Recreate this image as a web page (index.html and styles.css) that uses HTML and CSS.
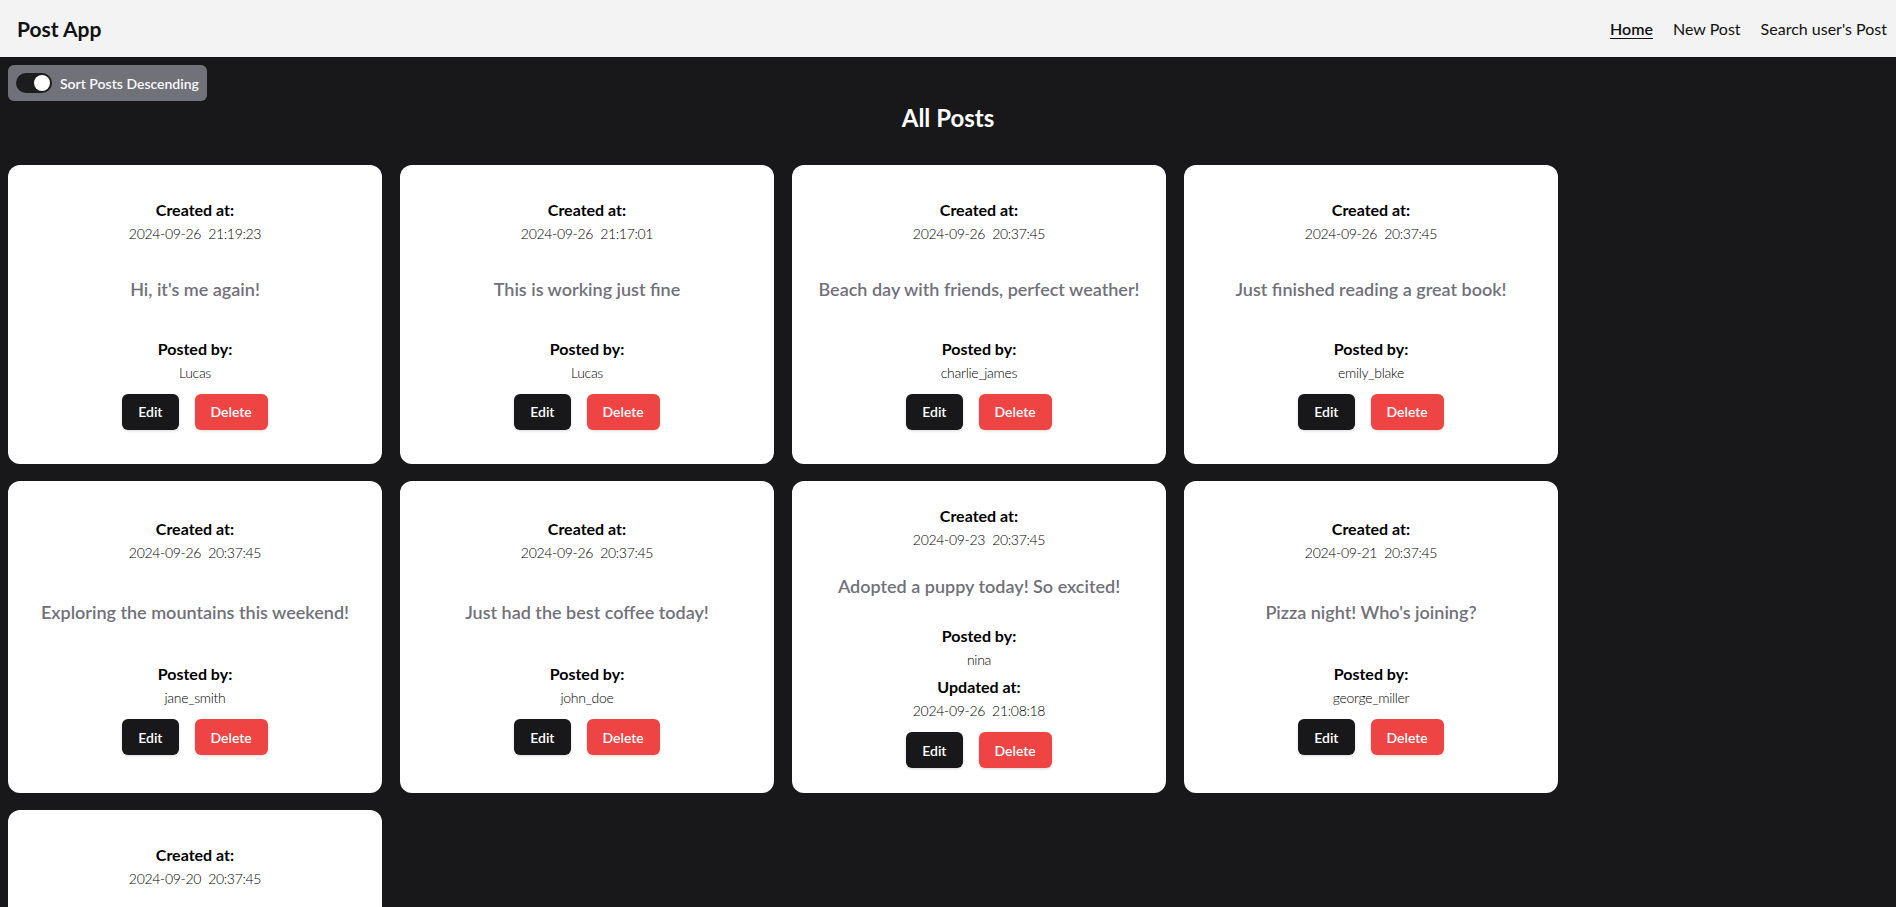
FILE: index.html
```html
<!DOCTYPE html>
<html lang="en">
<head>
<meta charset="utf-8">
<title>Post App</title>
<link rel="stylesheet" href="styles.css">
</head>
<body>
<header class="header">
  <div class="brand">Post App</div>
  <nav class="nav">
    <a class="nav-link active" href="#">Home</a>
    <a class="nav-link" href="#">New Post</a>
    <a class="nav-link" href="#">Search user's Post</a>
  </nav>
</header>
<main class="main">
  <button class="toggle" type="button">
    <span class="switch"><span class="knob"></span></span>
    <span class="toggle-label">Sort Posts Descending</span>
  </button>
  <h1 class="title">All Posts</h1>
  <div class="grid">
    <div class="card">
      <div class="block"><p class="label">Created at:</p><p class="date">2024-09-26  21:19:23</p></div>
      <p class="content">Hi, it's me again!</p>
      <div class="block"><p class="label">Posted by:</p><p class="date">Lucas</p>
        <div class="actions"><button class="btn btn-edit">Edit</button><button class="btn btn-delete">Delete</button></div></div>
    </div>
    <div class="card">
      <div class="block"><p class="label">Created at:</p><p class="date">2024-09-26  21:17:01</p></div>
      <p class="content">This is working just fine</p>
      <div class="block"><p class="label">Posted by:</p><p class="date">Lucas</p>
        <div class="actions"><button class="btn btn-edit">Edit</button><button class="btn btn-delete">Delete</button></div></div>
    </div>
    <div class="card">
      <div class="block"><p class="label">Created at:</p><p class="date">2024-09-26  20:37:45</p></div>
      <p class="content">Beach day with friends, perfect weather!</p>
      <div class="block"><p class="label">Posted by:</p><p class="date">charlie_james</p>
        <div class="actions"><button class="btn btn-edit">Edit</button><button class="btn btn-delete">Delete</button></div></div>
    </div>
    <div class="card">
      <div class="block"><p class="label">Created at:</p><p class="date">2024-09-26  20:37:45</p></div>
      <p class="content">Just finished reading a great book!</p>
      <div class="block"><p class="label">Posted by:</p><p class="date">emily_blake</p>
        <div class="actions"><button class="btn btn-edit">Edit</button><button class="btn btn-delete">Delete</button></div></div>
    </div>
    <div class="card">
      <div class="block"><p class="label">Created at:</p><p class="date">2024-09-26  20:37:45</p></div>
      <p class="content">Exploring the mountains this weekend!</p>
      <div class="block"><p class="label">Posted by:</p><p class="date">jane_smith</p>
        <div class="actions"><button class="btn btn-edit">Edit</button><button class="btn btn-delete">Delete</button></div></div>
    </div>
    <div class="card">
      <div class="block"><p class="label">Created at:</p><p class="date">2024-09-26  20:37:45</p></div>
      <p class="content">Just had the best coffee today!</p>
      <div class="block"><p class="label">Posted by:</p><p class="date">john_doe</p>
        <div class="actions"><button class="btn btn-edit">Edit</button><button class="btn btn-delete">Delete</button></div></div>
    </div>
    <div class="card">
      <div class="block"><p class="label">Created at:</p><p class="date">2024-09-23  20:37:45</p></div>
      <p class="content">Adopted a puppy today! So excited!</p>
      <div class="block"><p class="label">Posted by:</p><p class="date">nina</p>
        <p class="label updated">Updated at:</p><p class="date">2024-09-26  21:08:18</p>
        <div class="actions"><button class="btn btn-edit">Edit</button><button class="btn btn-delete">Delete</button></div></div>
    </div>
    <div class="card">
      <div class="block"><p class="label">Created at:</p><p class="date">2024-09-21  20:37:45</p></div>
      <p class="content">Pizza night! Who's joining?</p>
      <div class="block"><p class="label">Posted by:</p><p class="date">george_miller</p>
        <div class="actions"><button class="btn btn-edit">Edit</button><button class="btn btn-delete">Delete</button></div></div>
    </div>
    <div class="card">
      <div class="block"><p class="label">Created at:</p><p class="date">2024-09-20  20:37:45</p></div>
      <p class="content">Movie marathon tonight!</p>
      <div class="block"><p class="label">Posted by:</p><p class="date">alex_brown</p>
        <div class="actions"><button class="btn btn-edit">Edit</button><button class="btn btn-delete">Delete</button></div></div>
    </div>
  </div>
</main>
</body>
</html>
```
FILE: styles.css
```css
* { box-sizing: border-box; }

body {
  margin: 0;
  background: #18181b;
  font-family: Lato, "Open Sans", sans-serif;
  color: #09090b;
}

.header {
  height: 57px;
  background: #f3f3f3;
  display: flex;
  align-items: center;
  justify-content: space-between;
  padding: 0 9px 0 17px;
}

.brand {
  font-size: 21px;
  font-weight: 700;
  color: #111;
}

.nav {
  display: flex;
  gap: 20px;
  font-size: 16px;
}

.nav-link {
  color: #111;
  text-decoration: none;
}

.nav-link.active {
  font-weight: 600;
  text-decoration: underline;
  text-underline-offset: 3px;
}

.main {
  padding: 8px;
}

.toggle {
  display: inline-flex;
  align-items: center;
  gap: 8px;
  height: 36px;
  padding: 0 8px;
  border: none;
  background: #71717a;
  border-radius: 6px;
  color: #fafafa;
  font-family: inherit;
  font-size: 14px;
  font-weight: 600;
}

.switch {
  position: relative;
  width: 36px;
  height: 20px;
  border-radius: 10px;
  background: #1c1c1f;
}

.knob {
  position: absolute;
  top: 2px;
  right: 2px;
  width: 16px;
  height: 16px;
  border-radius: 50%;
  background: #fff;
}

.title {
  text-align: center;
  color: #fff;
  font-size: 24px;
  font-weight: 700;
  line-height: 32px;
  margin: 1px 0 31px;
}

.grid {
  display: flex;
  flex-wrap: wrap;
  gap: 17px 18px;
}

.card {
  background: #fff;
  border-radius: 12px;
  min-width: 374px;
  min-height: 299px;
  padding: 23px 24px 25px;
  display: flex;
  flex-direction: column;
  justify-content: space-evenly;
  align-items: center;
  text-align: center;
}

.block {
  display: flex;
  flex-direction: column;
  align-items: center;
}

.label {
  margin: 0;
  font-size: 16px;
  font-weight: 700;
  line-height: 24px;
  color: #000;
}

.label.updated {
  margin-top: 3px;
}

.date {
  margin: 0;
  font-size: 14px;
  font-weight: 300;
  line-height: 24px;
  letter-spacing: -0.3px;
  color: #000;
  white-space: pre;
}

.content {
  margin: 20px 0 24px;
  font-size: 18px;
  font-weight: 600;
  line-height: 28px;
  color: #71717a;
}

.actions {
  display: flex;
  gap: 16px;
  margin-top: 9px;
}

.btn {
  height: 36px;
  padding: 0 16px;
  border: none;
  border-radius: 6px;
  color: #fff;
  font-family: inherit;
  font-size: 14px;
  font-weight: 600;
  box-shadow: 0 1px 3px rgba(0, 0, 0, 0.15);
}

.btn-edit { background: #18181b; }
.btn-delete { background: #ef4444; }
```
